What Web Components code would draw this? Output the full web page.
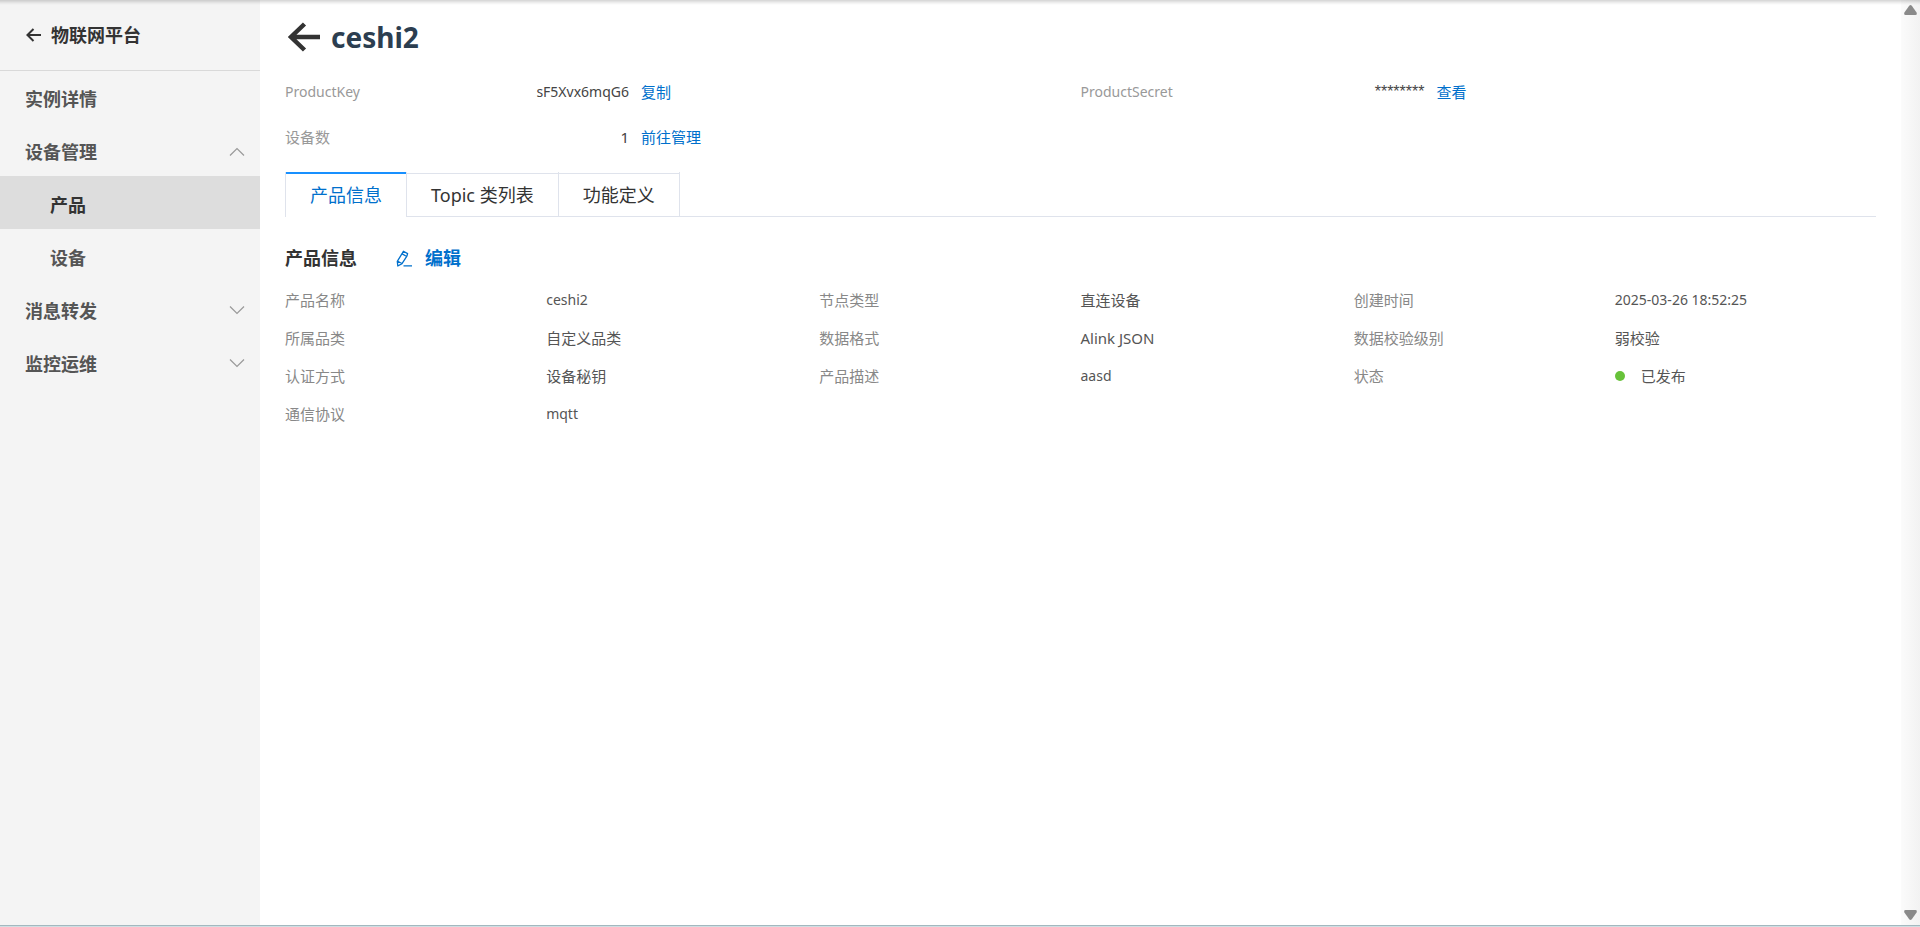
<!DOCTYPE html>
<html lang="zh-CN">
<head>
<meta charset="utf-8">
<meta name="viewport" content="width=device-width, initial-scale=1">
<title>ceshi2 - 物联网平台</title>
<style>
  body {
    margin: 0;
    background: #fff;
    color: #555;
    font-family: "Noto Sans", "Noto Sans CJK SC", sans-serif;
    font-size: 15px;
    line-height: 24px;
    --link: #0070cc;
    --line: #dfe3ec;
    --latin: 14px;
  }
</style>
</head>
<body>
<app-shell>
  <side-nav slot="nav" heading="物联网平台">
    <nav-item>实例详情</nav-item>
    <nav-item state="open">设备管理</nav-item>
    <nav-item level="2" active>产品</nav-item>
    <nav-item level="2">设备</nav-item>
    <nav-item state="closed">消息转发</nav-item>
    <nav-item state="closed">监控运维</nav-item>
  </side-nav>

  <page-title>ceshi2</page-title>

  <summary-grid>
    <summary-item label="ProductKey" action="复制" latin>sF5Xvx6mqG6</summary-item>
    <summary-item label="ProductSecret" action="查看" latin masked>********</summary-item>
    <summary-item label="设备数" action="前往管理">1</summary-item>
  </summary-grid>

  <tab-bar>
    <tab-item selected>产品信息</tab-item>
    <tab-item>Topic 类列表</tab-item>
    <tab-item>功能定义</tab-item>
  </tab-bar>

  <info-section heading="产品信息" action="编辑">
    <info-item label="产品名称" latin>ceshi2</info-item>
    <info-item label="节点类型">直连设备</info-item>
    <info-item label="创建时间" latin>2025-03-26 18:52:25</info-item>
    <info-item label="所属品类">自定义品类</info-item>
    <info-item label="数据格式">Alink JSON</info-item>
    <info-item label="数据校验级别">弱校验</info-item>
    <info-item label="认证方式">设备秘钥</info-item>
    <info-item label="产品描述" latin>aasd</info-item>
    <info-item label="状态"><status-dot>已发布</status-dot></info-item>
    <info-item label="通信协议" latin>mqtt</info-item>
  </info-section>
</app-shell>

<script>
  const define = (name, render) => customElements.define(name, class extends HTMLElement {
    connectedCallback() {
      if (this.shadowRoot) return;
      const template = document.createElement('template');
      template.innerHTML = render(this);
      this.attachShadow({ mode: 'open' }).append(template.content.cloneNode(true));
    }
  });

  define('app-shell', () => `
    <style>
      :host { display: flex; flex-direction: column; min-height: 100vh; position: relative; }
      .body { flex: 1; display: grid; grid-template-columns: 260px minmax(0, 1fr) 19px; }
      main { padding: 16px 25px; }
      .shade { position: absolute; inset: 0 0 auto; height: 5px; pointer-events: none;
        background: linear-gradient(rgba(0,0,0,.17), rgba(0,0,0,.05) 60%, rgba(0,0,0,0)); }
      .edge { height: 1px; background: #cfdfe3; border-top: 1px solid #a3b8bf; }
      .rail { display: flex; flex-direction: column; justify-content: space-between; align-items: center;
        padding: 5px 0; background: linear-gradient(90deg, #fbfbfb, #f2f2f2); }
      svg { display: block; fill: #8a8a8a; }
    </style>
    <div class="body">
      <slot name="nav"></slot>
      <main><slot></slot></main>
      <div class="rail" aria-hidden="true">
        <svg width="13" height="10"><path d="M5.2 .8Q6.5-.6 7.8.8L12.6 7.6Q13.4 10 11.4 10H1.6Q-.4 10 .4 7.6Z"/></svg>
        <svg width="13" height="10"><path d="M5.2 9.2Q6.5 10.6 7.8 9.2L12.6 2.4Q13.4 0 11.4 0H1.6Q-.4 0 .4 2.4Z"/></svg>
      </div>
    </div>
    <div class="edge"></div>
    <div class="shade"></div>`);

  define('side-nav', el => `
    <style>
      :host { display: block; background: #f4f4f4; }
      header { height: 70px; box-shadow: 0 1px 0 #d9d9d9; display: flex; align-items: center; }
      a { display: flex; align-items: center; gap: 10px; padding-left: 26px; color: #333;
        font-size: 18px; font-weight: 700; text-decoration: none; }
      svg { display: block; fill: none; stroke: #333; stroke-width: 2; }
    </style>
    <header><a href="#"><svg width="15" height="14"><path d="M15 7H1M7.5 1L1.4 7l6.1 6"/></svg>${el.getAttribute('heading')}</a></header>
    <nav><slot></slot></nav>`);

  define('nav-item', el => {
    const state = el.getAttribute('state');
    const tag = state ? 'button' : 'a';
    const attrs = state ? `type="button" aria-expanded="${state === 'open'}"` : 'href="#"';
    const path = state === 'open' ? 'M1 8.5L8 1.5l7 7' : 'M1 .5l7 7 7-7';
    return `
    <style>
      :host { display: block; }
      a, button { display: flex; align-items: center; justify-content: space-between; box-sizing: border-box;
        width: 100%; height: 53px; padding: 4px 15px 0 25px; border: 0; background: none; color: #555;
        font: inherit; font-size: 18px; font-weight: 700; text-decoration: none; }
      :host([level="2"]) a { padding-left: 50px; }
      :host([active]) a { background: #ddd; color: #333; }
      svg { display: block; fill: none; stroke: #999; stroke-width: 1.2; }
    </style>
    <${tag} ${attrs}><span><slot></slot></span>${state ? `<svg width="16" height="10"><path d="${path}"/></svg>` : ''}</${tag}>`;
  });

  define('page-title', () => `
    <style>
      :host { display: flex; align-items: center; gap: 11px; height: 42px; padding-left: 2px; }
      a { display: block; }
      svg { display: block; fill: none; stroke: #333; stroke-width: 4.5; }
      h1 { margin: 0; font-size: 28px; line-height: 42px; color: #2c3e50; }
    </style>
    <a href="#" aria-label="返回"><svg width="33" height="30"><path d="M33 15H4M17.5 2L4 15l13.5 13"/></svg></a>
    <h1><slot></slot></h1>`);

  define('summary-grid', () => `
    <style>
      :host { display: grid; grid-template-columns: repeat(2, minmax(0, 1fr)); row-gap: 21px; padding: 22px 0 23px; }
    </style><slot></slot>`);

  define('summary-item', el => `
    <style>
      :host { display: flex; gap: 12px; }
      .pair { display: flex; justify-content: space-between; width: 344px; }
      .label { color: #999; }
      .value { color: #444; }
      :host([latin]) .pair { font-size: var(--latin); }
      :host([masked]) .value { font-family: "Liberation Sans", sans-serif; font-size: 16px; }
      a { color: var(--link); text-decoration: none; }
    </style>
    <div class="pair"><span class="label">${el.getAttribute('label')}</span><span class="value"><slot></slot></span></div>
    <a href="#">${el.getAttribute('action')}</a>`);

  define('tab-bar', () => `
    <style>
      :host { display: flex; box-shadow: inset 0 -1px 0 var(--line); }
      div { display: flex; border-left: 1px solid var(--line); }
    </style><div role="tablist"><slot></slot></div>`);

  define('tab-item', el => `
    <style>
      :host { display: block; }
      button { display: block; height: 45px; padding: 1px 24px 0; font: inherit; font-size: 18px;
        color: #333; border: 0; border-right: 1px solid var(--line); white-space: nowrap;
        background: linear-gradient(var(--line), var(--line)) 0 1px / 100% 1px no-repeat; }
      :host([selected]) button { color: var(--link); background: linear-gradient(#1890ff, #1890ff) 0 0 / 100% 2px no-repeat #fff; }
    </style>
    <button type="button" role="tab" aria-selected="${el.hasAttribute('selected')}"><slot></slot></button>`);

  define('info-section', el => `
    <style>
      :host { display: block; padding-top: 28px; }
      header { display: flex; align-items: center; gap: 39px; font-size: 18px; line-height: 26px; font-weight: 700; }
      h2 { margin: 0; font: inherit; color: #333; }
      a { display: flex; align-items: center; gap: 13px; color: var(--link); text-decoration: none; }
      svg { display: block; fill: none; stroke: var(--link); stroke-width: 1.3; stroke-linejoin: round; }
      .grid { display: grid; grid-template-columns: repeat(3, minmax(0, 1fr)); column-gap: 12px; padding-top: 10px; }
    </style>
    <header>
      <h2>${el.getAttribute('heading')}</h2>
      <a href="#"><svg width="16" height="17"><path d="M7.4 1.2L11.6 3.6 10.9 6.2 6 13.6 1.8 16 1.3 11.4 6 3.7zM6.2 3.9l4.500 2.600M1.800 11.200l4 2.300M7.500 15.800H16"/></svg>${el.getAttribute('action')}</a>
    </header>
    <div class="grid"><slot></slot></div>`);

  define('info-item', el => `
    <style>
      :host { display: grid; grid-template-columns: repeat(2, minmax(0, 1fr)); line-height: 38px; }
      .label { color: #888; }
      .value { color: #555; }
      :host([latin]) .value { font-size: var(--latin); }
    </style>
    <span class="label">${el.getAttribute('label')}</span><span class="value"><slot></slot></span>`);

  define('status-dot', () => `
    <style>
      :host { display: flex; align-items: center; gap: 16px; }
      i { width: 10px; height: 10px; border-radius: 50%; background: #67c23a; }
    </style><i></i><span><slot></slot></span>`);
</script>
</body>
</html>
